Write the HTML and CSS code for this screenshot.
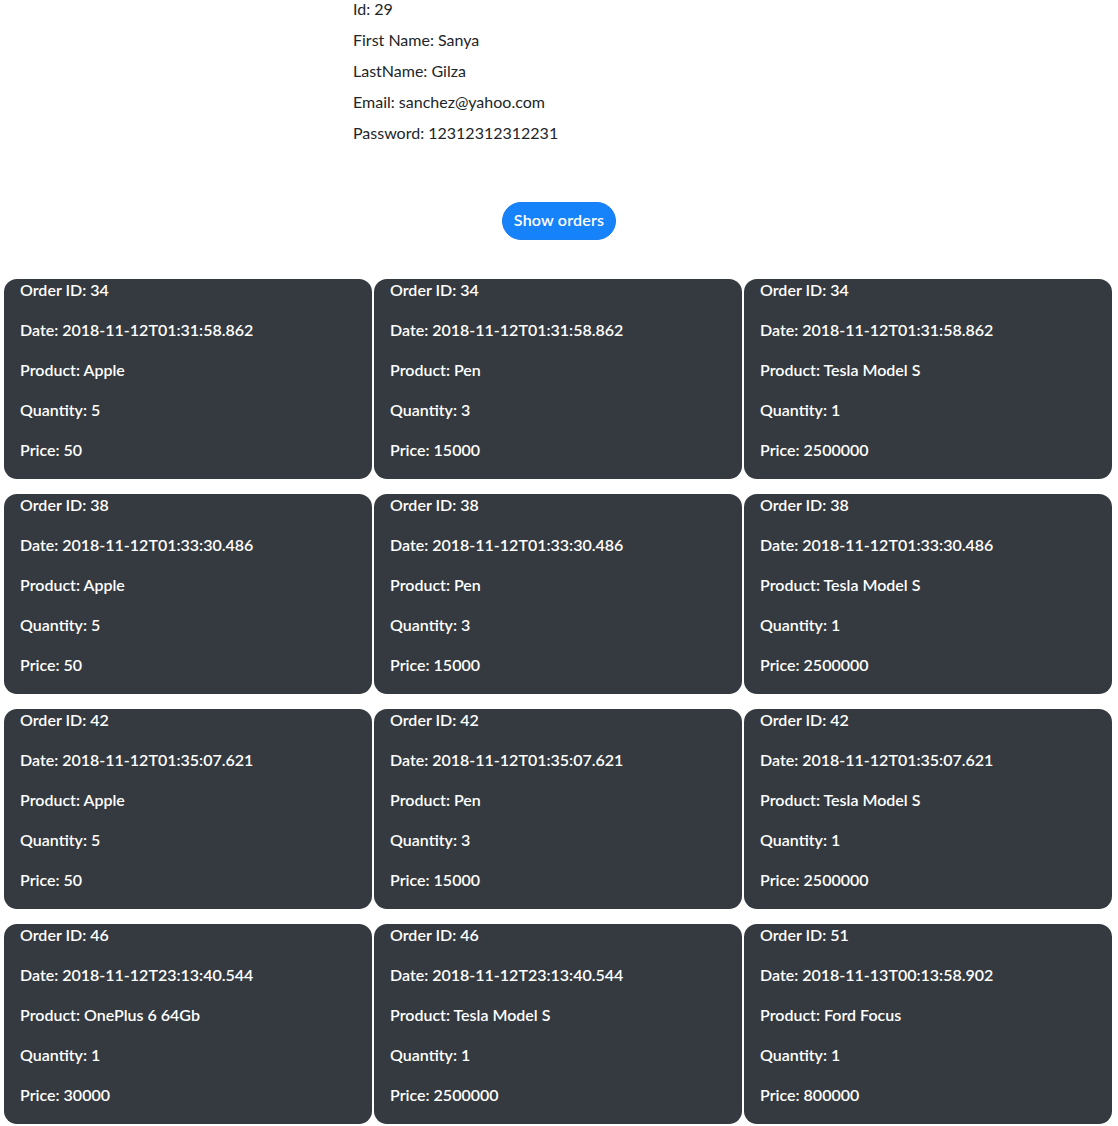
FILE: index.html
```html
<!DOCTYPE html>
<html lang="en">
<head>
<meta charset="utf-8">
<title>User orders</title>
<link rel="stylesheet" href="styles.css">
</head>
<body>
<section class="user">
  <p>Id: 29</p>
  <p>First Name: Sanya</p>
  <p>LastName: Gilza</p>
  <p>Email: sanchez@yahoo.com</p>
  <p>Password: 12312312312231</p>
</section>
<div class="actions">
  <button class="btn">Show orders</button>
</div>
<main class="orders">
  <div class="card"><p>Order ID: 34</p><p>Date: 2018-11-12T01:31:58.862</p><p>Product: Apple</p><p>Quantity: 5</p><p>Price: 50</p></div>
  <div class="card"><p>Order ID: 34</p><p>Date: 2018-11-12T01:31:58.862</p><p>Product: Pen</p><p>Quantity: 3</p><p>Price: 15000</p></div>
  <div class="card"><p>Order ID: 34</p><p>Date: 2018-11-12T01:31:58.862</p><p>Product: Tesla Model S</p><p>Quantity: 1</p><p>Price: 2500000</p></div>
  <div class="card"><p>Order ID: 38</p><p>Date: 2018-11-12T01:33:30.486</p><p>Product: Apple</p><p>Quantity: 5</p><p>Price: 50</p></div>
  <div class="card"><p>Order ID: 38</p><p>Date: 2018-11-12T01:33:30.486</p><p>Product: Pen</p><p>Quantity: 3</p><p>Price: 15000</p></div>
  <div class="card"><p>Order ID: 38</p><p>Date: 2018-11-12T01:33:30.486</p><p>Product: Tesla Model S</p><p>Quantity: 1</p><p>Price: 2500000</p></div>
  <div class="card"><p>Order ID: 42</p><p>Date: 2018-11-12T01:35:07.621</p><p>Product: Apple</p><p>Quantity: 5</p><p>Price: 50</p></div>
  <div class="card"><p>Order ID: 42</p><p>Date: 2018-11-12T01:35:07.621</p><p>Product: Pen</p><p>Quantity: 3</p><p>Price: 15000</p></div>
  <div class="card"><p>Order ID: 42</p><p>Date: 2018-11-12T01:35:07.621</p><p>Product: Tesla Model S</p><p>Quantity: 1</p><p>Price: 2500000</p></div>
  <div class="card"><p>Order ID: 46</p><p>Date: 2018-11-12T23:13:40.544</p><p>Product: OnePlus 6 64Gb</p><p>Quantity: 1</p><p>Price: 30000</p></div>
  <div class="card"><p>Order ID: 46</p><p>Date: 2018-11-12T23:13:40.544</p><p>Product: Tesla Model S</p><p>Quantity: 1</p><p>Price: 2500000</p></div>
  <div class="card"><p>Order ID: 51</p><p>Date: 2018-11-13T00:13:58.902</p><p>Product: Ford Focus</p><p>Quantity: 1</p><p>Price: 800000</p></div>
</main>
</body>
</html>
```
FILE: styles.css
```css
* { box-sizing: border-box; }
body {
  margin: 0;
  font-family: Lato, "Liberation Sans", sans-serif;
  font-size: 16px;
  color: #212529;
  background: #fff;
}
.user {
  padding-left: 353px;
}
.user p {
  margin: 0 0 13px;
  line-height: 18px;
}
.actions {
  display: flex;
  justify-content: center;
  margin-top: 60px;
}
.btn {
  font-family: inherit;
  font-size: 16px;
  font-weight: 600;
  color: #fff;
  background: #1683fb;
  border: 1px solid #1a7ff0;
  border-radius: 19px;
  height: 38px;
  padding: 0 11px 3px;
  letter-spacing: 0.2px;
}
.orders {
  display: grid;
  grid-template-columns: repeat(3, 368px);
  column-gap: 2px;
  row-gap: 15px;
  padding-left: 4px;
  margin-top: 39px;
}
.card {
  background: #343a40;
  color: #fff;
  border-radius: 13px;
  padding: 0 16px 18px;
  display: flex;
  flex-direction: column;
  gap: 18px;
  font-weight: 600;
}
.card p {
  margin: 0;
  line-height: 22px;
}
```
